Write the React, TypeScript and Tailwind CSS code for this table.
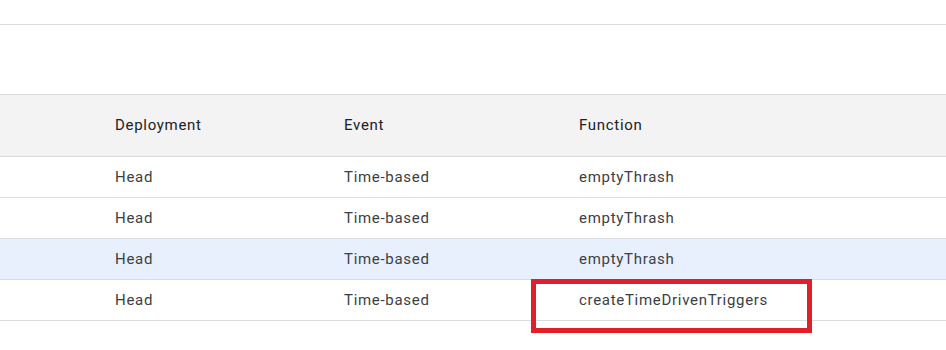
import React from "react";

const rows = [
  { d: "Head", e: "Time-based", f: "emptyThrash", hl: false },
  { d: "Head", e: "Time-based", f: "emptyThrash", hl: false },
  { d: "Head", e: "Time-based", f: "emptyThrash", hl: true },
  { d: "Head", e: "Time-based", f: "createTimeDrivenTriggers", hl: false },
];

export default function App() {
  return (
    <div
      className="relative w-[946px] h-[350px] bg-white overflow-hidden text-[15px] tracking-[0.7px] text-[#3c4043]"
      style={{ fontFamily: "Roboto, 'Liberation Sans', sans-serif" }}
    >
      <div className="h-[24px]" />
      <div className="h-px bg-[#dadce0]" />
      <div className="h-[69px]" />
      <div className="border-y border-[#dadce0] bg-[#f3f3f3] h-[63px] flex items-center pl-[115px] text-[#202124]">
        <div className="w-[229px]">Deployment</div>
        <div className="w-[235px]">Event</div>
        <div>Function</div>
      </div>
      {rows.map((r, i) => (
        <div
          key={i}
          className={`h-[41px] border-b border-[#dadce0] flex items-center pl-[115px] ${r.hl ? "bg-[#e8f0fe]" : "bg-white"}`}
        >
          <div className="w-[229px]">{r.d}</div>
          <div className="w-[235px]">{r.e}</div>
          <div>{r.f}</div>
        </div>
      ))}
      <div className="absolute left-[531px] top-[279px] w-[281px] h-[54px] border-[5px] border-[#e01f2b]" />
    </div>
  );
}
